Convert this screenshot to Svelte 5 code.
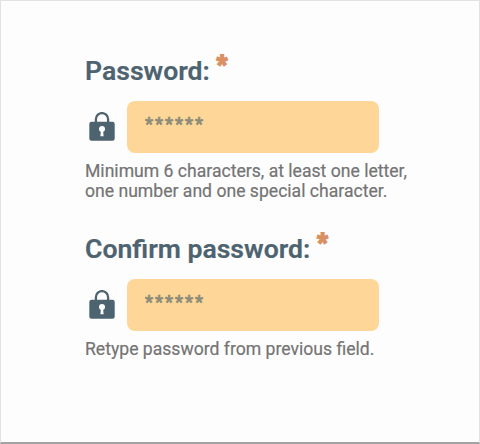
<script lang="ts">
  const fields = [
    {
      id: 'password',
      label: 'Password:',
      hint: ['Minimum 6 characters, at least one letter,', 'one number and one special character.']
    },
    {
      id: 'confirm',
      label: 'Confirm password:',
      hint: ['Retype password from previous field.']
    }
  ];
</script>

<form class="form">
  {#each fields as field}
    <div class="field">
      <label for={field.id}>
        <span>{field.label}</span>
        <span class="required">*</span>
      </label>
      <div class="input-row">
        <svg class="lock" width="26" height="29" viewBox="0 0 26 29">
          <path d="M6.9 11V7.2a6.1 6.1 0 0 1 12.2 0V11" fill="none" stroke="#4d6370" stroke-width="2.3" />
          <rect x="0.3" y="9.7" width="25.4" height="19" rx="2.2" fill="#4d6370" />
          <circle cx="13" cy="17" r="3" fill="#fdfdfd" />
          <path d="M12 18h2l.6 6.2h-3.2z" fill="#fdfdfd" />
        </svg>
        <input id={field.id} type="text" placeholder="******" />
      </div>
      <p class="hint">
        {#each field.hint as line}
          <span>{line}</span>
        {/each}
      </p>
    </div>
  {/each}
</form>

<style>
  :global(body) {
    background: #fdfdfd;
  }

  .form {
    box-sizing: border-box;
    height: 444px;
    padding: 54px 0 0 84px;
    border: 1px solid #e2e2e2;
    border-bottom: 2px solid #a2a2a2;
    font-family: Roboto, 'Liberation Sans', sans-serif;
  }

  .field {
    height: 178px;
  }

  label {
    display: flex;
    height: 32px;
    color: #4d6370;
    font-size: 26.6px;
    font-weight: 600;
    line-height: 32px;
    white-space: nowrap;
    -webkit-text-stroke: 0.2px #4d6370;
  }

  .required {
    margin-left: 7px;
    color: #d99163;
    font-size: 23px;
    font-weight: 700;
    line-height: 20px;
    -webkit-text-stroke: 2px #d99163;
  }

  .input-row {
    display: flex;
    gap: 12px;
    height: 52px;
    margin: 14px 0 0 4px;
  }

  .lock {
    flex: none;
    margin-top: 11px;
  }

  input {
    box-sizing: border-box;
    width: 252px;
    height: 52px;
    padding: 0 18px 8px;
    border: 0;
    border-radius: 8px;
    outline: none;
    background: #fed798;
    color: #8d8b79;
    font: 500 18px Roboto, 'Liberation Sans', sans-serif;
    letter-spacing: 2px;
  }

  input::placeholder {
    color: #8d8b79;
    opacity: 1;
    -webkit-text-stroke: 0.7px #8d8b79;
  }

  .hint {
    margin: 8px 0 0;
    color: #747474;
    font-size: 17.6px;
    line-height: 20px;
    white-space: nowrap;
    -webkit-text-stroke: 0.2px #747474;
  }

  .hint span {
    display: block;
  }
</style>
